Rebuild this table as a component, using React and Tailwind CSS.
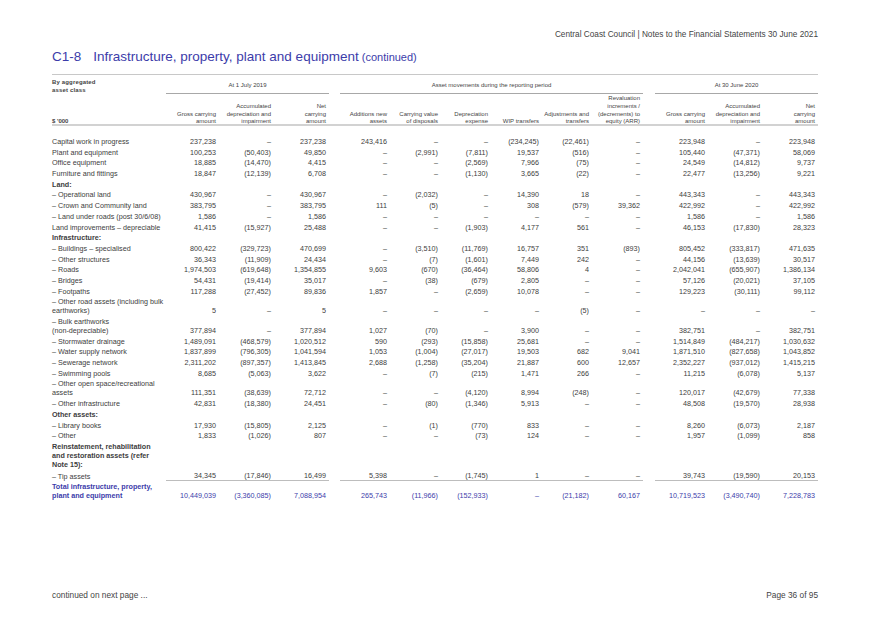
import React from 'react'

const GRID =
  'grid grid-cols-[114px_53px_55px_55px_11px_50px_51px_50px_51px_50px_51px_12px_53px_55px_55px]'

const rows = [
  { label: 'Capital work in progress', v: ['237,238', '–', '237,238', '243,416', '–', '–', '(234,245)', '(22,461)', '–', '223,948', '–', '223,948'] },
  { label: 'Plant and equipment', v: ['100,253', '(50,403)', '49,850', '–', '(2,991)', '(7,811)', '19,537', '(516)', '–', '105,440', '(47,371)', '58,069'] },
  { label: 'Office equipment', v: ['18,885', '(14,470)', '4,415', '–', '–', '(2,569)', '7,966', '(75)', '–', '24,549', '(14,812)', '9,737'] },
  { label: 'Furniture and fittings', v: ['18,847', '(12,139)', '6,708', '–', '–', '(1,130)', '3,665', '(22)', '–', '22,477', '(13,256)', '9,221'] },
  { label: 'Land:', heading: true },
  { label: '– Operational land', v: ['430,967', '–', '430,967', '–', '(2,032)', '–', '14,390', '18', '–', '443,343', '–', '443,343'] },
  { label: '– Crown and Community land', v: ['383,795', '–', '383,795', '111', '(5)', '–', '308', '(579)', '39,362', '422,992', '–', '422,992'] },
  { label: '– Land under roads (post 30/6/08)', v: ['1,586', '–', '1,586', '–', '–', '–', '–', '–', '–', '1,586', '–', '1,586'] },
  { label: 'Land improvements – depreciable', v: ['41,415', '(15,927)', '25,488', '–', '–', '(1,903)', '4,177', '561', '–', '46,153', '(17,830)', '28,323'] },
  { label: 'Infrastructure:', heading: true },
  { label: '– Buildings – specialised', v: ['800,422', '(329,723)', '470,699', '–', '(3,510)', '(11,769)', '16,757', '351', '(893)', '805,452', '(333,817)', '471,635'] },
  { label: '– Other structures', v: ['36,343', '(11,909)', '24,434', '–', '(7)', '(1,601)', '7,449', '242', '–', '44,156', '(13,639)', '30,517'] },
  { label: '– Roads', v: ['1,974,503', '(619,648)', '1,354,855', '9,603', '(670)', '(36,464)', '58,806', '4', '–', '2,042,041', '(655,907)', '1,386,134'] },
  { label: '– Bridges', v: ['54,431', '(19,414)', '35,017', '–', '(38)', '(679)', '2,805', '–', '–', '57,126', '(20,021)', '37,105'] },
  { label: '– Footpaths', v: ['117,288', '(27,452)', '89,836', '1,857', '–', '(2,659)', '10,078', '–', '–', '129,223', '(30,111)', '99,112'] },
  { label: ['– Other road assets (including bulk', 'earthworks)'], v: ['5', '–', '5', '–', '–', '–', '–', '(5)', '–', '–', '–', '–'] },
  { label: ['– Bulk earthworks', '(non-depreciable)'], v: ['377,894', '–', '377,894', '1,027', '(70)', '–', '3,900', '–', '–', '382,751', '–', '382,751'] },
  { label: '– Stormwater drainage', v: ['1,489,091', '(468,579)', '1,020,512', '590', '(293)', '(15,858)', '25,681', '–', '–', '1,514,849', '(484,217)', '1,030,632'] },
  { label: '– Water supply network', v: ['1,837,899', '(796,305)', '1,041,594', '1,053', '(1,004)', '(27,017)', '19,503', '682', '9,041', '1,871,510', '(827,658)', '1,043,852'] },
  { label: '– Sewerage network', v: ['2,311,202', '(897,357)', '1,413,845', '2,688', '(1,258)', '(35,204)', '21,887', '600', '12,657', '2,352,227', '(937,012)', '1,415,215'] },
  { label: '– Swimming pools', v: ['8,685', '(5,063)', '3,622', '–', '(7)', '(215)', '1,471', '266', '–', '11,215', '(6,078)', '5,137'] },
  { label: ['– Other open space/recreational', 'assets'], v: ['111,351', '(38,639)', '72,712', '–', '–', '(4,120)', '8,994', '(248)', '–', '120,017', '(42,679)', '77,338'] },
  { label: '– Other infrastructure', v: ['42,831', '(18,380)', '24,451', '–', '(80)', '(1,346)', '5,913', '–', '–', '48,508', '(19,570)', '28,938'] },
  { label: 'Other assets:', heading: true },
  { label: '– Library books', v: ['17,930', '(15,805)', '2,125', '–', '(1)', '(770)', '833', '–', '–', '8,260', '(6,073)', '2,187'] },
  { label: '– Other', v: ['1,833', '(1,026)', '807', '–', '–', '(73)', '124', '–', '–', '1,957', '(1,099)', '858'] },
  { label: ['Reinstatement, rehabilitation', 'and restoration assets (refer', 'Note 15):'], heading: true },
  { label: '– Tip assets', v: ['34,345', '(17,846)', '16,499', '5,398', '–', '(1,745)', '1', '–', '–', '39,743', '(19,590)', '20,153'], rule: true },
  { label: ['Total infrastructure, property,', 'plant and equipment'], v: ['10,449,039', '(3,360,085)', '7,088,954', '265,743', '(11,966)', '(152,933)', '–', '(21,182)', '60,167', '10,719,523', '(3,490,740)', '7,228,783'], total: true },
]

const colHeads = [
  ['Gross carrying', 'amount'],
  ['Accumulated', 'depreciation and', 'impairment'],
  ['Net', 'carrying', 'amount'],
  ['Additions new', 'assets'],
  ['Carrying value', 'of disposals'],
  ['Depreciation', 'expense'],
  ['WIP transfers'],
  ['Adjustments and', 'transfers'],
  ['Revaluation', 'increments /', '(decrements) to', 'equity (ARR)'],
  ['Gross carrying', 'amount'],
  ['Accumulated', 'depreciation and', 'impairment'],
  ['Net', 'carrying', 'amount'],
]

function Lines({ lines }) {
  const arr = Array.isArray(lines) ? lines : [lines]
  return arr.map((l, i) => <div key={i}>{l}</div>)
}

function HeadCell({ lines }) {
  return (
    <div className="pr-[3px] text-right -mb-[2px]">
      <Lines lines={lines} />
    </div>
  )
}

function NumCell({ value, rule }) {
  return (
    <div className={`py-[0.85px] pr-[3px] text-right whitespace-nowrap ${rule ? 'border-b-[1.5px] border-[#bdbdbd]' : ''}`}>
      {value}
    </div>
  )
}

function DataRow({ row }) {
  const { label, v, heading, total, rule } = row
  return (
    <div className={`${GRID} items-end leading-[9px] ${total ? 'text-[#3c3caa]' : ''}`}>
      <div className={`py-[0.85px] whitespace-nowrap ${heading || total ? 'font-bold' : ''}`}>
        <Lines lines={label} />
      </div>
      {v && (
        <>
          {v.slice(0, 3).map((x, i) => <NumCell key={'a' + i} value={x} rule={rule} />)}
          <div />
          {v.slice(3, 9).map((x, i) => <NumCell key={'b' + i} value={x} rule={rule} />)}
          <div />
          {v.slice(9).map((x, i) => <NumCell key={'c' + i} value={x} rule={rule} />)}
        </>
      )}
    </div>
  )
}

export default function App() {
  return (
    <div className="w-[871px] h-[618px] bg-white flex flex-col px-[52px] text-[#3d3d3d] font-['Liberation_Sans',Arial,sans-serif]">
      {/* running header */}
      <div className="pt-[30px] leading-[10px] text-[8.25px] text-right pr-[1px] text-[#444]">
        Central Coast Council | Notes to the Financial Statements 30 June 2021
      </div>

      {/* section title */}
      <div className="mt-[9px] leading-[16px] text-[13.5px] text-[#3c3caa] whitespace-nowrap">
        <span>C1-8</span>
        <span className="ml-[12px]">Infrastructure, property, plant and equipment</span>
        <span className="text-[11px]"> (continued)</span>
      </div>

      {/* table */}
      <div className="mt-[9px] w-[766px] border-t border-[#c8c8c8]">
        {/* group headings */}
        <div className={`${GRID} text-[6px] leading-[7.5px] text-[#444]`}>
          <div className="pt-[4px] font-bold tracking-[0.15px]">
            <div>By aggregated</div>
            <div>asset class</div>
          </div>
          <div className="col-span-3 pt-[7px] pb-[3px] text-center border-b border-[#a8a8a8]">At 1 July 2019</div>
          <div />
          <div className="col-span-6 pt-[7px] pb-[3px] text-center border-b border-[#a8a8a8]">
            Asset movements during the reporting period
          </div>
          <div />
          <div className="col-span-3 pt-[7px] pb-[3px] text-center border-b border-[#a8a8a8]">At 30 June 2020</div>
        </div>

        {/* column headings */}
        <div className={`${GRID} items-end pt-[1px] text-[6px] leading-[7.8px] text-[#444] border-b-2 border-[#d2d2d2]`}>
          <div className="font-bold -mb-[2px]">$ &apos;000</div>
          {colHeads.slice(0, 3).map((h, i) => <HeadCell key={'a' + i} lines={h} />)}
          <div />
          {colHeads.slice(3, 9).map((h, i) => <HeadCell key={'b' + i} lines={h} />)}
          <div />
          {colHeads.slice(9).map((h, i) => <HeadCell key={'c' + i} lines={h} />)}
        </div>

        {/* body */}
        <div className="pt-[10px] text-[7.2px]">
          {rows.map((r, i) => (
            <DataRow key={i} row={r} />
          ))}
        </div>
      </div>

      {/* footer */}
      <div className="mt-auto pb-[18px] flex justify-between leading-[10px] text-[8.3px] text-[#444]">
        <span>continued on next page ...</span>
        <span className="pr-[1px]">Page 36 of 95</span>
      </div>
    </div>
  )
}
